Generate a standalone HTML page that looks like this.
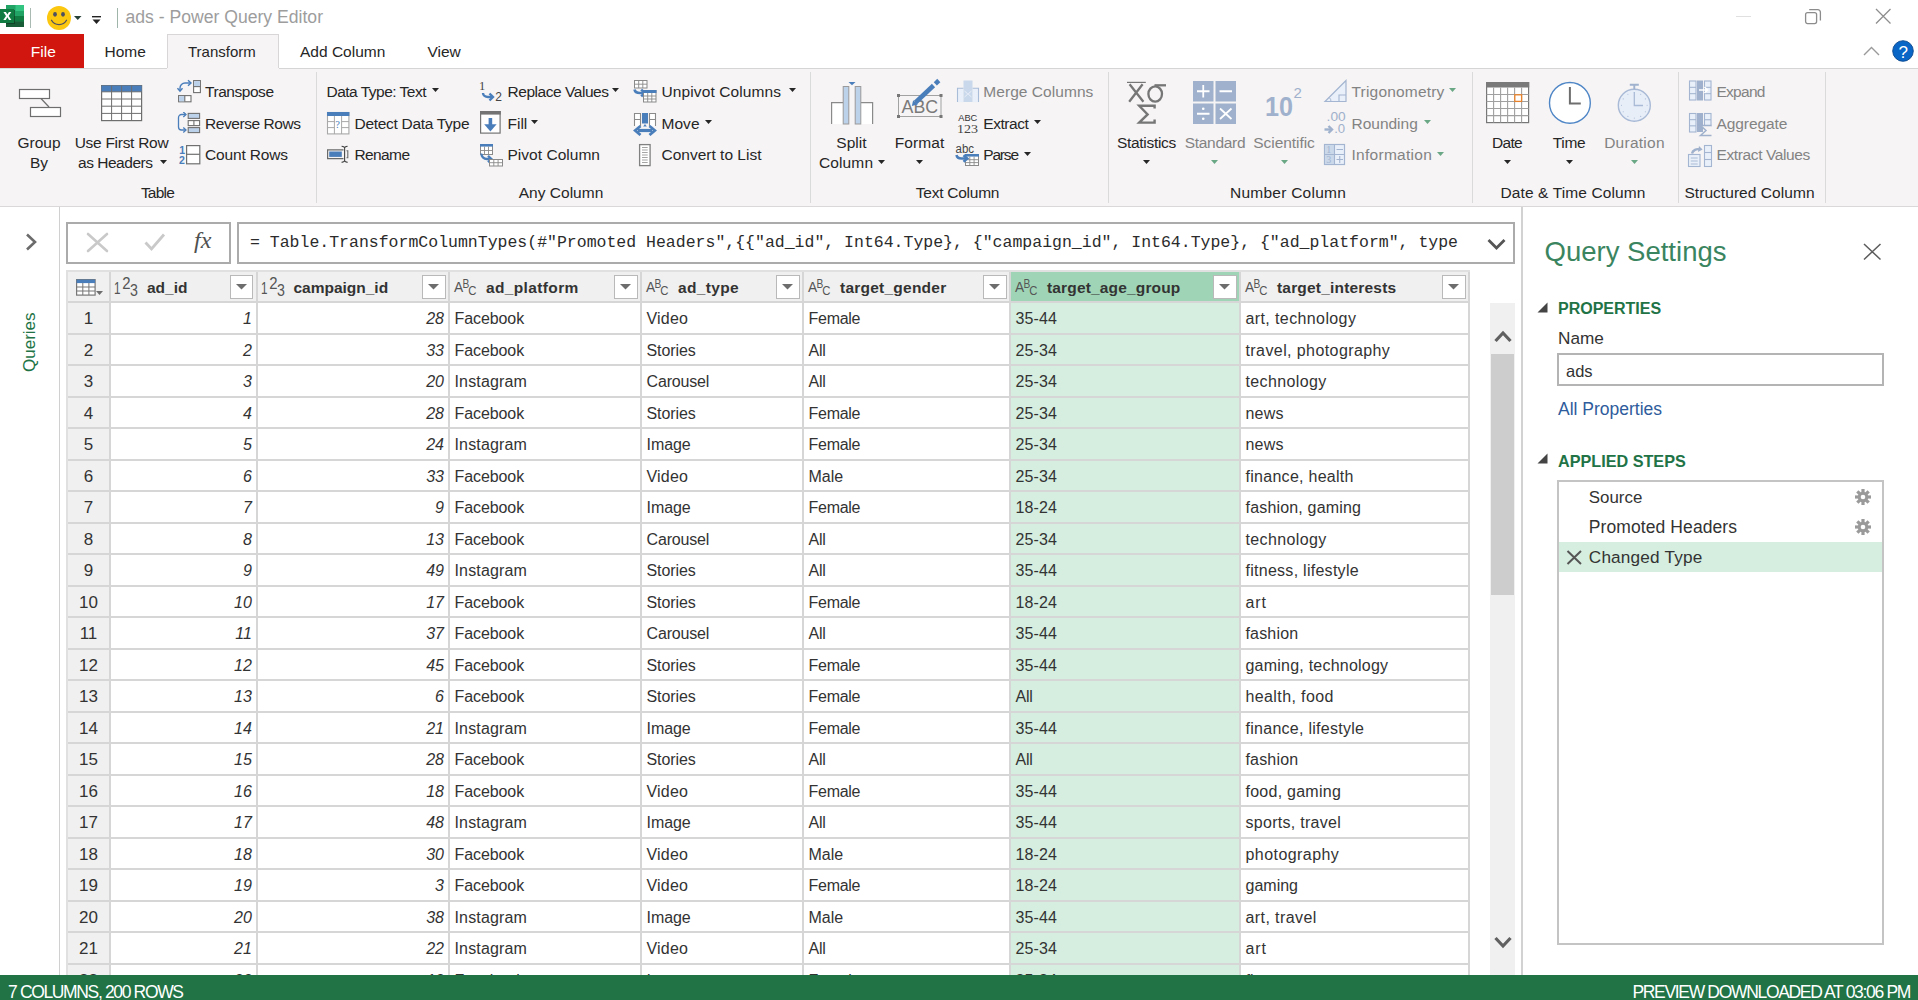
<!DOCTYPE html><html><head><meta charset="utf-8"><style>
html,body{margin:0;padding:0;}
body{width:1918px;height:1000px;position:relative;overflow:hidden;background:#fff;font-family:"Liberation Sans",sans-serif;}
.t{position:absolute;white-space:nowrap;line-height:1;}
.r{position:absolute;box-sizing:border-box;}
</style></head><body>

<svg class="r" style="left:0px;top:5px" width="25" height="23" viewBox="0 0 25 23">
<rect x="6" y="0" width="18" height="22" fill="#21a366"/>
<rect x="15.5" y="0" width="8.5" height="6" fill="#33c481"/>
<rect x="6" y="11" width="18" height="5.3" fill="#107c41"/>
<rect x="6" y="16.3" width="18" height="5.7" fill="#185c37"/>
<rect x="6" y="5" width="9" height="14" fill="#0e2e1c" opacity="0.55"/>
<rect x="0" y="4" width="14" height="14" fill="#107c41"/>
<path d="M3.4 7h2.5l1.5 2.6 1.5-2.6h2.4l-2.6 4 2.7 4H9l-1.6-2.7-1.6 2.7H3.3l2.7-4z" fill="#fff"/>
</svg>
<div class="r" style="left:29.8px;top:8px;width:1.2px;height:20px;background:#a9bab3;"></div>
<svg class="r" style="left:47px;top:6px" width="25" height="25" viewBox="0 0 25 25">
<circle cx="12" cy="12" r="12" fill="#fcc70f"/>
<ellipse cx="8" cy="8.3" rx="1.9" ry="2.4" fill="#4d5060"/>
<ellipse cx="16" cy="8.3" rx="1.9" ry="2.4" fill="#4d5060"/>
<path d="M4.5 14.3 A8.5 8 0 0 0 19.5 14.3" stroke="#4d5060" stroke-width="1.3" fill="none" stroke-linecap="round"/>
</svg>
<svg class="r" style="left:74px;top:16px" width="8" height="5" viewBox="0 0 8 5"><path d="M0 0H7.5L3.75 4Z" fill="#264037"/></svg>
<svg class="r" style="left:92px;top:15px" width="10" height="10" viewBox="0 0 10 10"><rect x="0" y="1" width="9" height="1.4" fill="#222"/><path d="M0.5 4.5H8.5L4.5 9Z" fill="#222"/></svg>
<div class="r" style="left:117px;top:8px;width:1.2px;height:20px;background:#9fb5ac;"></div>
<div class="t" style="left:125.5px;top:9.10px;font-size:17.6px;color:#9d9d9d;font-weight:normal;font-style:normal;font-family:'Liberation Sans', sans-serif;">ads - Power Query Editor</div>
<div class="r" style="left:1736px;top:16px;width:15px;height:1px;background:#e0e0e0;"></div>
<svg class="r" style="left:1804px;top:8px" width="18" height="17" viewBox="0 0 18 17"><rect x="1.6" y="4.6" width="11" height="11" rx="2" fill="none" stroke="#8c8c8c" stroke-width="1.3"/><path d="M5.2 1.6H13.8a2.6 2.6 0 0 1 2.6 2.6V12.6" fill="none" stroke="#8c8c8c" stroke-width="1.3"/></svg>
<svg class="r" style="left:1875px;top:8px" width="17" height="17" viewBox="0 0 17 17"><path d="M1 1L15.5 15.5M15.5 1L1 15.5" stroke="#8e8e8e" stroke-width="1.3"/></svg>
<div class="r" style="left:0px;top:34px;width:84px;height:34px;background:#d1160f;"></div>
<div class="t" style="left:30.8px;top:43.88px;font-size:15.5px;color:#ffffff;font-weight:normal;font-style:normal;font-family:'Liberation Sans', sans-serif;">File</div>
<div class="t" style="left:104.5px;top:43.88px;font-size:15.5px;color:#262626;font-weight:normal;font-style:normal;font-family:'Liberation Sans', sans-serif;">Home</div>
<div class="r" style="left:167px;top:34px;width:112px;height:35px;background:#f6f4f5;border:1px solid #d8d6d7;border-bottom:none;"></div>
<div class="t" style="left:188px;top:44.30px;font-size:15.0px;color:#262626;font-weight:normal;font-style:normal;font-family:'Liberation Sans', sans-serif;">Transform</div>
<div class="t" style="left:300px;top:43.88px;font-size:15.5px;color:#262626;font-weight:normal;font-style:normal;font-family:'Liberation Sans', sans-serif;">Add Column</div>
<div class="t" style="left:427.5px;top:43.88px;font-size:15.5px;color:#262626;font-weight:normal;font-style:normal;font-family:'Liberation Sans', sans-serif;">View</div>
<svg class="r" style="left:1863px;top:46px" width="18" height="10" viewBox="0 0 18 10"><path d="M1 9L8.5 1.5L16 9" fill="none" stroke="#9a9a9a" stroke-width="1.4"/></svg>
<svg class="r" style="left:1892px;top:40px" width="22" height="22" viewBox="0 0 22 22"><circle cx="11" cy="11" r="10.3" fill="#0a66c6" stroke="#0b4a8e" stroke-width="0.9"/><text x="11.3" y="17.6" font-family="Liberation Sans" font-size="17" fill="#fff" text-anchor="middle">?</text></svg>
<div class="r" style="left:0px;top:68px;width:1918px;height:139px;background:#f6f4f5;"></div>
<div class="r" style="left:0px;top:68px;width:167px;height:1px;background:#d5d5d5;"></div>
<div class="r" style="left:279px;top:68px;width:1639px;height:1px;background:#d5d5d5;"></div>
<div class="r" style="left:0px;top:206px;width:1918px;height:1px;background:#dad8d9;"></div>
<div class="r" style="left:316px;top:72px;width:1px;height:131px;background:#dadada;"></div>
<div class="r" style="left:810px;top:72px;width:1px;height:131px;background:#dadada;"></div>
<div class="r" style="left:1108px;top:72px;width:1px;height:131px;background:#dadada;"></div>
<div class="r" style="left:1471.5px;top:72px;width:1px;height:131px;background:#dadada;"></div>
<div class="r" style="left:1678px;top:72px;width:1px;height:131px;background:#dadada;"></div>
<div class="r" style="left:1825px;top:72px;width:1px;height:131px;background:#dadada;"></div>
<svg class="r" style="left:18px;top:88px" width="45" height="30" viewBox="0 0 45 30"><rect x="1.5" y="1.5" width="30" height="9" fill="#fff" stroke="#6e6e6e" stroke-width="1.2"/><path d="M23 10.5L31 19" stroke="#6e6e6e" stroke-width="1.2"/><rect x="12.5" y="19.5" width="30" height="9" fill="#fff" stroke="#6e6e6e" stroke-width="1.2"/></svg>
<div class="t" style="left:-1.0px;width:80px;text-align:center;top:134.58px;font-size:15.5px;color:#262626;font-weight:normal;letter-spacing:-0.023px;">Group</div>
<div class="t" style="left:-1.0px;width:80px;text-align:center;top:154.88px;font-size:15.5px;color:#262626;font-weight:normal;">By</div>
<svg class="r" style="left:101px;top:85px" width="42" height="37" viewBox="0 0 42 37"><rect x="0.6" y="0.6" width="40" height="35" fill="#fff" stroke="#6e6e6e" stroke-width="1.2"/><rect x="0.6" y="0.6" width="40" height="6.2" fill="#4a7ebb"/><path d="M10.6 0.6V35.6" stroke="#6e6e6e" stroke-width="1"/><path d="M20.6 0.6V35.6" stroke="#6e6e6e" stroke-width="1"/><path d="M30.6 0.6V35.6" stroke="#6e6e6e" stroke-width="1"/><path d="M0.6 6.8H40.6" stroke="#6e6e6e" stroke-width="1"/><path d="M0.6 14H40.6" stroke="#6e6e6e" stroke-width="1"/><path d="M0.6 21.2H40.6" stroke="#6e6e6e" stroke-width="1"/><path d="M0.6 28.4H40.6" stroke="#6e6e6e" stroke-width="1"/></svg>
<div class="t" style="left:61.5px;width:120px;text-align:center;top:134.58px;font-size:15.5px;color:#262626;font-weight:normal;letter-spacing:-0.282px;">Use First Row</div>
<div class="t" style="left:78px;top:154.88px;font-size:15.5px;color:#262626;font-weight:normal;font-style:normal;font-family:'Liberation Sans', sans-serif;letter-spacing:-0.476px;">as Headers</div>
<svg class="r" style="left:159.5px;top:160px" width="7" height="4" viewBox="0 0 7 4"><path d="M0 0H7L3.5 4Z" fill="#262626"/></svg>
<svg class="r" style="left:177px;top:79px" width="25" height="24" viewBox="0 0 25 24"><path d="M3 11.5V9a5 5 0 0 1 5-5H13.5" fill="none" stroke="#4a7ebb" stroke-width="1.4"/><path d="M11 1.3L14 4L11 6.7" fill="none" stroke="#4a7ebb" stroke-width="1.4"/><path d="M0.5 9.2L3 12.2L5.5 9.2" fill="none" stroke="#4a7ebb" stroke-width="1.4"/>
<rect x="16.6" y="1.6" width="6.8" height="12" fill="#fff" stroke="#707070" stroke-width="1.1"/><rect x="17.1" y="2.1" width="5.8" height="5.5" fill="#bcd1ea"/><path d="M16.6 7.6H23.4" stroke="#707070" stroke-width="1.1"/>
<rect x="1.6" y="16.6" width="12.4" height="6.2" fill="#fff" stroke="#707070" stroke-width="1.1"/><rect x="2.1" y="17.1" width="5.7" height="5.2" fill="#bcd1ea"/><path d="M7.8 16.6V22.8" stroke="#707070" stroke-width="1.1"/></svg>
<div class="t" style="left:205px;top:84.08px;font-size:15.5px;color:#262626;font-weight:normal;font-style:normal;font-family:'Liberation Sans', sans-serif;letter-spacing:-0.457px;">Transpose</div>
<svg class="r" style="left:177px;top:112px" width="24" height="24" viewBox="0 0 24 24"><path d="M8.5 2.5H4.5a3 3 0 0 0-3 3V15a3 3 0 0 0 3 3H8.5" fill="none" stroke="#4a7ebb" stroke-width="1.3"/><path d="M6.3 0L9 2.5L6.3 5M6.3 15.5L9 18L6.3 20.5" fill="none" stroke="#4a7ebb" stroke-width="1.3"/>
<rect x="11.2" y="1.4" width="11.4" height="5" fill="#bcd1ea" stroke="#707070" stroke-width="1.1"/><rect x="11.2" y="8.6" width="11.4" height="5" fill="#fff" stroke="#707070" stroke-width="1.1"/><path d="M16.9 8.6V13.6" stroke="#707070" stroke-width="1.1"/><rect x="11.2" y="15.6" width="11.4" height="5" fill="#bcd1ea" stroke="#707070" stroke-width="1.1"/></svg>
<div class="t" style="left:205px;top:115.68px;font-size:15.5px;color:#262626;font-weight:normal;font-style:normal;font-family:'Liberation Sans', sans-serif;letter-spacing:-0.435px;">Reverse Rows</div>
<svg class="r" style="left:177px;top:144px" width="24" height="22" viewBox="0 0 24 22"><text x="2.2" y="9.8" font-family="Liberation Sans" font-size="10.5" font-weight="bold" fill="#4a7ebb">1</text><text x="2" y="19.8" font-family="Liberation Sans" font-size="10.5" font-weight="bold" fill="#4a7ebb">2</text>
<rect x="9.6" y="1.6" width="13.2" height="18.2" fill="#fff" stroke="#707070" stroke-width="1.2"/><path d="M9.6 10.3H22.8" stroke="#707070" stroke-width="1.2"/></svg>
<div class="t" style="left:205px;top:147.38px;font-size:15.5px;color:#262626;font-weight:normal;font-style:normal;font-family:'Liberation Sans', sans-serif;letter-spacing:-0.160px;">Count Rows</div>
<div class="t" style="left:127.5px;width:60px;text-align:center;top:184.58px;font-size:15.5px;color:#262626;font-weight:normal;letter-spacing:-0.761px;">Table</div>
<div class="t" style="left:326.5px;top:84.08px;font-size:15.5px;color:#262626;font-weight:normal;font-style:normal;font-family:'Liberation Sans', sans-serif;letter-spacing:-0.510px;">Data Type: Text</div>
<svg class="r" style="left:432px;top:88px" width="7" height="4" viewBox="0 0 7 4"><path d="M0 0H7L3.5 4Z" fill="#262626"/></svg>
<svg class="r" style="left:326px;top:111px" width="24" height="24" viewBox="0 0 24 24"><rect x="1.5" y="1.5" width="21.4" height="21.4" fill="#fff" stroke="#a8a8a8" stroke-width="1.1"/><rect x="1" y="1" width="22.4" height="4" fill="#4a7ebb"/>
<path d="M8.4 5V23M15.6 5V23M1.5 10.6H8.4M15.6 10.6H23M1.5 16.6H8.4M15.6 16.6H23" stroke="#a8a8a8" stroke-width="1"/>
<text x="9.3" y="17.2" font-family="Liberation Serif" font-size="10.5" fill="#4a7ebb">?</text></svg>
<div class="t" style="left:354.5px;top:115.68px;font-size:15.5px;color:#262626;font-weight:normal;font-style:normal;font-family:'Liberation Sans', sans-serif;letter-spacing:-0.298px;">Detect Data Type</div>
<svg class="r" style="left:326px;top:145px" width="24" height="19" viewBox="0 0 24 19"><path d="M17.5 4.8H1.6V13.6H17.5" fill="none" stroke="#6a6a6a" stroke-width="1.2"/><rect x="3.2" y="6.5" width="12.6" height="5.4" fill="#4a7ebb"/><path d="M20.5 5.8H21.8V12.8H20.5" fill="none" stroke="#6a6a6a" stroke-width="1.1"/>
<path d="M18.6 2V16.5M15.6 1.2Q18.6 1.6 18.6 3Q18.6 1.6 21.6 1.2M15.6 17.4Q18.6 17 18.6 15.6Q18.6 17 21.6 17.4" fill="none" stroke="#444" stroke-width="1.1"/></svg>
<div class="t" style="left:354.5px;top:147.38px;font-size:15.5px;color:#262626;font-weight:normal;font-style:normal;font-family:'Liberation Sans', sans-serif;letter-spacing:-0.618px;">Rename</div>
<svg class="r" style="left:478px;top:79px" width="26" height="24" viewBox="0 0 26 24"><text x="1" y="10.8" font-family="Liberation Serif" font-size="12.5" fill="#444">1</text><text x="17.2" y="21.9" font-family="Liberation Sans" font-size="12" fill="#444">2</text>
<path d="M5 14a5 4 0 0 0 5 4H14" fill="none" stroke="#4a7ebb" stroke-width="2.4"/><path d="M11.5 14.5L15 18L11.5 21.5" fill="none" stroke="#4a7ebb" stroke-width="2.4"/></svg>
<div class="t" style="left:507.5px;top:84.08px;font-size:15.5px;color:#262626;font-weight:normal;font-style:normal;font-family:'Liberation Sans', sans-serif;letter-spacing:-0.455px;">Replace Values</div>
<svg class="r" style="left:612px;top:88px" width="7" height="4" viewBox="0 0 7 4"><path d="M0 0H7L3.5 4Z" fill="#262626"/></svg>
<svg class="r" style="left:479px;top:110px" width="23" height="25" viewBox="0 0 23 25"><rect x="1.6" y="1.6" width="19.5" height="21.5" fill="#fff" stroke="#747474" stroke-width="1.2"/><rect x="1" y="1" width="20.8" height="3.6" fill="#747474"/><path d="M11.4 8V17" stroke="#4a7ebb" stroke-width="3.6"/><path d="M5.2 14.2H17.6L11.4 21.5Z" fill="#4a7ebb"/></svg>
<div class="t" style="left:507.5px;top:115.68px;font-size:15.5px;color:#262626;font-weight:normal;font-style:normal;font-family:'Liberation Sans', sans-serif;">Fill</div>
<svg class="r" style="left:531px;top:120px" width="7" height="4" viewBox="0 0 7 4"><path d="M0 0H7L3.5 4Z" fill="#262626"/></svg>
<svg class="r" style="left:479px;top:143px" width="25" height="24" viewBox="0 0 25 24"><rect x="1.5" y="1.5" width="12" height="10" fill="#fff" stroke="#8a8a8a" stroke-width="1"/><rect x="1" y="1" width="13" height="2.6" fill="#4a7ebb"/><path d="M5.5 3.5V11.5M9.5 3.5V11.5M1.5 7.5H13.5" stroke="#8a8a8a" stroke-width="0.9"/>
<path d="M2.5 10.5a5.5 5 0 0 0 5.5 5.5H12" fill="none" stroke="#4a7ebb" stroke-width="2.3"/><path d="M9 12.8L12.4 16L9 19.2" fill="none" stroke="#4a7ebb" stroke-width="2.3"/>
<rect x="10.5" y="16.5" width="13" height="6.5" fill="#fff" stroke="#8a8a8a" stroke-width="1"/><path d="M14.8 16.5V23M19.1 16.5V23M10.5 19.7H23.5" stroke="#8a8a8a" stroke-width="0.9"/></svg>
<div class="t" style="left:507.5px;top:147.38px;font-size:15.5px;color:#262626;font-weight:normal;font-style:normal;font-family:'Liberation Sans', sans-serif;letter-spacing:0.029px;">Pivot Column</div>
<svg class="r" style="left:633px;top:79px" width="25" height="25" viewBox="0 0 25 25"><rect x="1.5" y="1.5" width="12.5" height="7.5" fill="#fff" stroke="#8a8a8a" stroke-width="1"/><path d="M5.7 1.5V9M9.8 1.5V9M1.5 5.2H14" stroke="#8a8a8a" stroke-width="0.9"/>
<path d="M1.5 10.5a5.5 4 0 0 0 5.5 3.5H11" fill="none" stroke="#4a7ebb" stroke-width="2.6"/><path d="M8.2 10.6L11.8 14L8.2 17.4" fill="none" stroke="#4a7ebb" stroke-width="2.6"/>
<rect x="10.5" y="11.5" width="12.5" height="11.5" fill="#fff" stroke="#8a8a8a" stroke-width="1"/><rect x="10" y="11" width="13.5" height="3" fill="#4a7ebb"/><path d="M14.7 14V23M18.8 14V23M10.5 17H23M10.5 20H23" stroke="#8a8a8a" stroke-width="0.9"/></svg>
<div class="t" style="left:661.5px;top:84.08px;font-size:15.5px;color:#262626;font-weight:normal;font-style:normal;font-family:'Liberation Sans', sans-serif;letter-spacing:0.112px;">Unpivot Columns</div>
<svg class="r" style="left:789px;top:88px" width="7" height="4" viewBox="0 0 7 4"><path d="M0 0H7L3.5 4Z" fill="#262626"/></svg>
<svg class="r" style="left:633px;top:112px" width="25" height="24" viewBox="0 0 25 24"><path d="M1.5 14V1.5H7.5V14M1.5 7.5H7.5M16.5 14V1.5H22.5V14M16.5 7.5H22.5" fill="#fff" stroke="#8a8a8a" stroke-width="1.1"/><rect x="9" y="1" width="6" height="10.5" fill="#4a7ebb"/><path d="M12 12L10.2 14.5H13.8Z" fill="#4a7ebb"/>
<path d="M5 18.5H19" stroke="#4a7ebb" stroke-width="3.2"/><path d="M7.5 14L2.2 18.5L7.5 23M16.5 14L21.8 18.5L16.5 23" fill="none" stroke="#4a7ebb" stroke-width="2.8"/></svg>
<div class="t" style="left:661.5px;top:115.68px;font-size:15.5px;color:#262626;font-weight:normal;font-style:normal;font-family:'Liberation Sans', sans-serif;letter-spacing:0.034px;">Move</div>
<svg class="r" style="left:705px;top:120px" width="7" height="4" viewBox="0 0 7 4"><path d="M0 0H7L3.5 4Z" fill="#262626"/></svg>
<svg class="r" style="left:638px;top:143px" width="14" height="24" viewBox="0 0 14 24"><rect x="1.6" y="1.6" width="10.5" height="21" fill="#fff" stroke="#808080" stroke-width="1.3"/><path d="M4 4.5H9.7M4 7H9.7M4 9.5H9.7M4 12H9.7M4 14.5H9.7M4 17H9.7M4 19.5H9.7" stroke="#9a9a9a" stroke-width="0.9"/></svg>
<div class="t" style="left:661.5px;top:147.38px;font-size:15.5px;color:#262626;font-weight:normal;font-style:normal;font-family:'Liberation Sans', sans-serif;letter-spacing:0.005px;">Convert to List</div>
<div class="t" style="left:501.0px;width:120px;text-align:center;top:184.58px;font-size:15.5px;color:#262626;font-weight:normal;letter-spacing:0.029px;">Any Column</div>
<svg class="r" style="left:830px;top:81px" width="45" height="44" viewBox="0 0 45 44"><rect x="1.6" y="21.6" width="11.6" height="21.4" fill="#fff"/><rect x="30.8" y="21.6" width="11.8" height="21.4" fill="#fff"/><path d="M1.6 43V21.6H13.2M30.8 21.6H42.6V43" fill="none" stroke="#8a8a8a" stroke-width="1.2"/>
<rect x="13.2" y="5.5" width="5.6" height="37.5" fill="#bcd1ea" stroke="#9a9a9a" stroke-width="1"/><rect x="25.2" y="5.5" width="5.6" height="37.5" fill="#bcd1ea" stroke="#9a9a9a" stroke-width="1"/><path d="M18.5 1H25.5L22 4.3Z" fill="#4a7ebb"/></svg>
<div class="t" style="left:821.5px;width:60px;text-align:center;top:134.58px;font-size:15.5px;color:#262626;font-weight:normal;letter-spacing:0.063px;">Split</div>
<div class="t" style="left:819px;top:154.88px;font-size:15.5px;color:#262626;font-weight:normal;font-style:normal;font-family:'Liberation Sans', sans-serif;letter-spacing:0.120px;">Column</div>
<svg class="r" style="left:878px;top:160px" width="7" height="4" viewBox="0 0 7 4"><path d="M0 0H7L3.5 4Z" fill="#262626"/></svg>
<svg class="r" style="left:896px;top:78px" width="47" height="41" viewBox="0 0 47 41"><rect x="2.5" y="17.5" width="42.5" height="21" fill="none" stroke="#9a9a9a" stroke-width="0.9"/><rect x="1" y="16" width="3" height="3" fill="#777"/><rect x="43.5" y="16" width="3" height="3" fill="#777"/><rect x="1" y="37" width="3" height="3" fill="#777"/><rect x="43.5" y="37" width="3" height="3" fill="#777"/>
<text x="23.8" y="34.7" font-family="Liberation Sans" font-size="19" fill="#7a7a7a" text-anchor="middle" textLength="36.5" lengthAdjust="spacingAndGlyphs">ABC</text>
<path d="M19.5 24.5L37.5 7.5" stroke="#4a7ebb" stroke-width="4.6"/><path d="M39.3 5.8L42.8 2.5" stroke="#4a7ebb" stroke-width="4.6"/><path d="M15.8 28L17.2 22.2L21.7 26.6Z" fill="#4a7ebb"/></svg>
<div class="t" style="left:884.5px;width:70px;text-align:center;top:134.58px;font-size:15.5px;color:#262626;font-weight:normal;letter-spacing:0.081px;">Format</div>
<svg class="r" style="left:916px;top:160px" width="7" height="4" viewBox="0 0 7 4"><path d="M0 0H7L3.5 4Z" fill="#262626"/></svg>
<svg class="r" style="left:956px;top:80px" width="24" height="23" viewBox="0 0 24 23"><rect x="1.5" y="8.2" width="6" height="14" fill="#eaf0f9"/><rect x="16.5" y="8.2" width="6" height="14" fill="#eaf0f9"/><path d="M1.5 22V8.2H7.5M16.5 8.2H22.5V22" fill="none" stroke="#a9bcd8" stroke-width="1.1"/><rect x="7.5" y="0.5" width="9" height="21.5" fill="#c9d8ea"/><path d="M8.5 11L11.8 14L8.5 17M15.5 11L12.2 14L15.5 17" fill="none" stroke="#eaf0f9" stroke-width="1"/></svg>
<div class="t" style="left:983.3px;top:84.08px;font-size:15.5px;color:#838383;font-weight:normal;font-style:normal;font-family:'Liberation Sans', sans-serif;letter-spacing:0.051px;">Merge Columns</div>
<svg class="r" style="left:956px;top:112px" width="23" height="22" viewBox="0 0 23 22"><text x="11.8" y="9.3" font-family="Liberation Sans" font-size="9.8" fill="#333" text-anchor="middle" textLength="19" lengthAdjust="spacingAndGlyphs">ABC</text><text x="11.5" y="20.5" font-family="Liberation Serif" font-size="13" fill="#444" text-anchor="middle" textLength="21" lengthAdjust="spacingAndGlyphs">123</text></svg>
<div class="t" style="left:983.3px;top:115.68px;font-size:15.5px;color:#262626;font-weight:normal;font-style:normal;font-family:'Liberation Sans', sans-serif;letter-spacing:-0.457px;">Extract</div>
<svg class="r" style="left:1034px;top:120px" width="7" height="4" viewBox="0 0 7 4"><path d="M0 0H7L3.5 4Z" fill="#262626"/></svg>
<svg class="r" style="left:955px;top:143px" width="25" height="24" viewBox="0 0 25 24"><text x="0.6" y="10" font-family="Liberation Sans" font-size="12.5" fill="#444" textLength="18.5" lengthAdjust="spacingAndGlyphs">abc</text>
<rect x="10.5" y="11.5" width="13" height="11" fill="#fff" stroke="#8a8a8a" stroke-width="1"/><rect x="10" y="11" width="14" height="2.6" fill="#4a7ebb"/><path d="M14.8 13.6V22.5M19.1 13.6V22.5M10.5 16.7H23.5M10.5 19.6H23.5" stroke="#8a8a8a" stroke-width="0.9"/>
<path d="M1.5 12a5 4 0 0 0 5 3.5H11.5" fill="none" stroke="#4a7ebb" stroke-width="2.5"/><path d="M8.5 12.3L12.3 15.5L8.5 18.7" fill="none" stroke="#4a7ebb" stroke-width="2.5"/></svg>
<div class="t" style="left:983.3px;top:147.38px;font-size:15.5px;color:#262626;font-weight:normal;font-style:normal;font-family:'Liberation Sans', sans-serif;letter-spacing:-1.198px;">Parse</div>
<svg class="r" style="left:1024px;top:152px" width="7" height="4" viewBox="0 0 7 4"><path d="M0 0H7L3.5 4Z" fill="#262626"/></svg>
<div class="t" style="left:897.5px;width:120px;text-align:center;top:184.58px;font-size:15.5px;color:#262626;font-weight:normal;letter-spacing:-0.244px;">Text Column</div>
<svg class="r" style="left:1126px;top:81px" width="42" height="44" viewBox="0 0 42 44"><g fill="none" stroke="#767676"><path d="M1 1.4H19.8" stroke-width="1.2"/><path d="M3.6 3.2L17.4 20.8M16.6 3.2L3.2 20.8" stroke-width="2.3"/><ellipse cx="29.2" cy="13" rx="6.8" ry="7.6" stroke-width="2.3"/><path d="M28.5 4.3H40" stroke-width="2.3"/><path d="M28.6 27.5V24.8H13.2L21.6 33.4L13.2 41.6H28.6V38.5" stroke-width="2.4"/></g></svg>
<div class="t" style="left:1106.5px;width:80px;text-align:center;top:134.58px;font-size:15.5px;color:#262626;font-weight:normal;letter-spacing:-0.300px;">Statistics</div>
<svg class="r" style="left:1143px;top:160px" width="7" height="4" viewBox="0 0 7 4"><path d="M0 0H7L3.5 4Z" fill="#262626"/></svg>
<svg class="r" style="left:1193px;top:81px" width="43" height="43" viewBox="0 0 43 43"><rect x="0" y="0" width="20.5" height="20.5" fill="#9fb1cc"/><rect x="22.5" y="0" width="20.5" height="20.5" fill="#9fb1cc"/><rect x="0" y="22.5" width="20.5" height="20.5" fill="#9fb1cc"/><rect x="22.5" y="22.5" width="20.5" height="20.5" fill="#9fb1cc"/>
<path d="M10.25 4V16.5M4 10.25H16.5M26.5 10.25H39M4 32.75H16.5M27 27.5L38.5 38M38.5 27.5L27 38" stroke="#fff" stroke-width="1.8"/><circle cx="10.25" cy="27.8" r="1.3" fill="#fff"/><circle cx="10.25" cy="37.7" r="1.3" fill="#fff"/></svg>
<div class="t" style="left:1175.0px;width:80px;text-align:center;top:134.58px;font-size:15.5px;color:#838383;font-weight:normal;letter-spacing:-0.284px;">Standard</div>
<svg class="r" style="left:1210.5px;top:160px" width="7" height="4" viewBox="0 0 7 4"><path d="M0 0H7L3.5 4Z" fill="#6aa784"/></svg>
<svg class="r" style="left:1264px;top:84px" width="40" height="34" viewBox="0 0 40 34"><text x="1" y="32" font-family="Liberation Sans" font-weight="bold" font-size="27" fill="#9fb1cc" textLength="28" lengthAdjust="spacingAndGlyphs">10</text><text x="29.5" y="14" font-family="Liberation Sans" font-size="15" fill="#9fb1cc">2</text></svg>
<div class="t" style="left:1244.0px;width:80px;text-align:center;top:134.58px;font-size:15.5px;color:#838383;font-weight:normal;letter-spacing:-0.060px;">Scientific</div>
<svg class="r" style="left:1280.5px;top:160px" width="7" height="4" viewBox="0 0 7 4"><path d="M0 0H7L3.5 4Z" fill="#6aa784"/></svg>
<svg class="r" style="left:1323px;top:79px" width="25" height="25" viewBox="0 0 25 25"><path d="M2 22.5L23 1.5V22.5Z" fill="#eaf0f9" stroke="#a3b5d0" stroke-width="1.2"/><path d="M16 22.5V16H23" fill="none" stroke="#a3b5d0" stroke-width="1.1"/><path d="M8 22.5a5 5 0 0 0-1.6-3.8" fill="none" stroke="#a3b5d0" stroke-width="1"/></svg>
<div class="t" style="left:1351.5px;top:84.08px;font-size:15.5px;color:#838383;font-weight:normal;font-style:normal;font-family:'Liberation Sans', sans-serif;letter-spacing:0.190px;">Trigonometry</div>
<svg class="r" style="left:1449px;top:88px" width="7" height="4" viewBox="0 0 7 4"><path d="M0 0H7L3.5 4Z" fill="#6aa784"/></svg>
<svg class="r" style="left:1323px;top:110px" width="25" height="25" viewBox="0 0 25 25"><text x="3.6" y="11" font-family="Liberation Sans" font-size="12.5" fill="#9fb1cc" textLength="19" lengthAdjust="spacingAndGlyphs">.00</text><text x="11.2" y="23.2" font-family="Liberation Sans" font-size="12.5" fill="#9fb1cc" textLength="11" lengthAdjust="spacingAndGlyphs">.0</text><path d="M1.5 19.5H8.5" stroke="#9fb1cc" stroke-width="2.4"/><path d="M5.5 16L9 19.5L5.5 23" fill="none" stroke="#9fb1cc" stroke-width="2.4"/></svg>
<div class="t" style="left:1351.5px;top:115.68px;font-size:15.5px;color:#838383;font-weight:normal;font-style:normal;font-family:'Liberation Sans', sans-serif;letter-spacing:-0.011px;">Rounding</div>
<svg class="r" style="left:1424px;top:120px" width="7" height="4" viewBox="0 0 7 4"><path d="M0 0H7L3.5 4Z" fill="#6aa784"/></svg>
<svg class="r" style="left:1323px;top:143px" width="23" height="23" viewBox="0 0 23 23"><rect x="1.5" y="1.5" width="20" height="20" fill="#eaf0f9" stroke="#a3b5d0" stroke-width="1.2"/><rect x="2" y="2" width="9.5" height="19" fill="#cad8ea"/><path d="M11.5 1.5V21.5M1.5 11.5H21.5" stroke="#a3b5d0" stroke-width="1.1"/>
<text x="3.3" y="10" font-family="Liberation Serif" font-size="10" fill="#a3b5d0">1</text><text x="3.3" y="20" font-family="Liberation Serif" font-size="10" fill="#a3b5d0">3</text><path d="M13.5 6.5H20M13.5 16.5H20M16.75 13V20" stroke="#a3b5d0" stroke-width="1.1"/></svg>
<div class="t" style="left:1351.5px;top:147.38px;font-size:15.5px;color:#838383;font-weight:normal;font-style:normal;font-family:'Liberation Sans', sans-serif;letter-spacing:0.276px;">Information</div>
<svg class="r" style="left:1437px;top:152px" width="7" height="4" viewBox="0 0 7 4"><path d="M0 0H7L3.5 4Z" fill="#6aa784"/></svg>
<div class="t" style="left:1223.0px;width:130px;text-align:center;top:184.58px;font-size:15.5px;color:#262626;font-weight:normal;letter-spacing:0.247px;">Number Column</div>
<svg class="r" style="left:1486px;top:82px" width="44" height="42" viewBox="0 0 44 42"><rect x="0.6" y="0.6" width="42" height="40" fill="#fff" stroke="#777" stroke-width="1.2"/><rect x="0" y="0" width="43.2" height="5.5" fill="#7a7a7a"/><path d="M7.60 5.5V40.6" stroke="#a0a0a0" stroke-width="1.1"/><path d="M14.60 5.5V40.6" stroke="#a0a0a0" stroke-width="1.1"/><path d="M21.60 5.5V40.6" stroke="#a0a0a0" stroke-width="1.1"/><path d="M28.60 5.5V40.6" stroke="#a0a0a0" stroke-width="1.1"/><path d="M35.60 5.5V40.6" stroke="#a0a0a0" stroke-width="1.1"/><path d="M0.6 12.52H42.6" stroke="#a0a0a0" stroke-width="1.1"/><path d="M0.6 19.54H42.6" stroke="#a0a0a0" stroke-width="1.1"/><path d="M0.6 26.56H42.6" stroke="#a0a0a0" stroke-width="1.1"/><path d="M0.6 33.58H42.6" stroke="#a0a0a0" stroke-width="1.1"/><rect x="28.8" y="12.8" width="6.8" height="6.6" fill="#fff" stroke="#e8822a" stroke-width="1.3"/></svg>
<div class="t" style="left:1477.0px;width:60px;text-align:center;top:134.58px;font-size:15.5px;color:#262626;font-weight:normal;letter-spacing:-0.648px;">Date</div>
<svg class="r" style="left:1504px;top:160px" width="7" height="4" viewBox="0 0 7 4"><path d="M0 0H7L3.5 4Z" fill="#262626"/></svg>
<svg class="r" style="left:1548px;top:81px" width="44" height="44" viewBox="0 0 44 44"><circle cx="21.9" cy="21.9" r="20.4" fill="#fff" stroke="#4f86c6" stroke-width="1.4"/><path d="M21.9 6V22.6H32.8" fill="none" stroke="#6e6e6e" stroke-width="2"/></svg>
<div class="t" style="left:1539.0px;width:60px;text-align:center;top:134.58px;font-size:15.5px;color:#262626;font-weight:normal;letter-spacing:-0.356px;">Time</div>
<svg class="r" style="left:1566px;top:160px" width="7" height="4" viewBox="0 0 7 4"><path d="M0 0H7L3.5 4Z" fill="#262626"/></svg>
<svg class="r" style="left:1616px;top:83px" width="36" height="40" viewBox="0 0 36 40"><circle cx="18.3" cy="22.3" r="16" fill="#e8eef8" stroke="#a9bad6" stroke-width="1.4"/><path d="M18.3 6.3V2M13.8 1.8H22.8" stroke="#a0b2ce" stroke-width="1.9"/><circle cx="31.10" cy="22.30" r="0.55" fill="#a9bad6"/><circle cx="29.39" cy="28.70" r="0.55" fill="#a9bad6"/><circle cx="24.70" cy="33.39" r="0.55" fill="#a9bad6"/><circle cx="18.30" cy="35.10" r="0.55" fill="#a9bad6"/><circle cx="11.90" cy="33.39" r="0.55" fill="#a9bad6"/><circle cx="7.21" cy="28.70" r="0.55" fill="#a9bad6"/><circle cx="5.50" cy="22.30" r="0.55" fill="#a9bad6"/><circle cx="7.21" cy="15.90" r="0.55" fill="#a9bad6"/><circle cx="11.90" cy="11.21" r="0.55" fill="#a9bad6"/><circle cx="18.30" cy="9.50" r="0.55" fill="#a9bad6"/><circle cx="24.70" cy="11.21" r="0.55" fill="#a9bad6"/><circle cx="29.39" cy="15.90" r="0.55" fill="#a9bad6"/><path d="M18.3 9V22.5H27" fill="none" stroke="#a9bad6" stroke-width="1.3"/></svg>
<div class="t" style="left:1594.5px;width:80px;text-align:center;top:134.58px;font-size:15.5px;color:#838383;font-weight:normal;letter-spacing:0.259px;">Duration</div>
<svg class="r" style="left:1631px;top:160px" width="7" height="4" viewBox="0 0 7 4"><path d="M0 0H7L3.5 4Z" fill="#6aa784"/></svg>
<div class="t" style="left:1493.0px;width:160px;text-align:center;top:184.58px;font-size:15.5px;color:#262626;font-weight:normal;letter-spacing:0.112px;">Date &amp; Time Column</div>
<svg class="r" style="left:1688px;top:80px" width="25" height="21" viewBox="0 0 25 21"><rect x="1.5" y="1" width="6.5" height="19" fill="#eaf0f9" stroke="#a3b5d0" stroke-width="1.1"/><path d="M1.5 7.33H8.0" stroke="#a3b5d0" stroke-width="1.1"/><path d="M1.5 13.67H8.0" stroke="#a3b5d0" stroke-width="1.1"/><rect x="9" y="0.5" width="6" height="20" fill="#9fb1cc"/><rect x="16.5" y="1" width="6.5" height="19" fill="#eaf0f9" stroke="#a3b5d0" stroke-width="1.1"/><path d="M16.5 7.33H23.0" stroke="#a3b5d0" stroke-width="1.1"/><path d="M16.5 13.67H23.0" stroke="#a3b5d0" stroke-width="1.1"/><path d="M11 10H19M16.5 7L19.5 10L16.5 13" fill="none" stroke="#fff" stroke-width="1.6"/></svg>
<div class="t" style="left:1716.5px;top:84.08px;font-size:15.5px;color:#838383;font-weight:normal;font-style:normal;font-family:'Liberation Sans', sans-serif;letter-spacing:-0.737px;">Expand</div>
<svg class="r" style="left:1688px;top:112px" width="25" height="25" viewBox="0 0 25 25"><rect x="1.5" y="1.5" width="6.5" height="18.5" fill="#eaf0f9" stroke="#a3b5d0" stroke-width="1.1"/><path d="M1.5 7.67H8.0" stroke="#a3b5d0" stroke-width="1.1"/><path d="M1.5 13.83H8.0" stroke="#a3b5d0" stroke-width="1.1"/><rect x="9" y="1" width="6" height="19" fill="#9fb1cc"/><rect x="16.5" y="1.5" width="6.5" height="12.5" fill="#eaf0f9" stroke="#a3b5d0" stroke-width="1.1"/><path d="M16.5 7.75H23.0" stroke="#a3b5d0" stroke-width="1.1"/><path d="M23.5 13.5H12.5L18 18.5L12.5 23.5H23.5" fill="#f6f4f5" stroke="#9fb1cc" stroke-width="1.5"/></svg>
<div class="t" style="left:1716.5px;top:115.68px;font-size:15.5px;color:#838383;font-weight:normal;font-style:normal;font-family:'Liberation Sans', sans-serif;letter-spacing:-0.079px;">Aggregate</div>
<svg class="r" style="left:1687px;top:144px" width="26" height="24" viewBox="0 0 26 24"><rect x="1.5" y="10.5" width="11.5" height="12" fill="#eaf0f9" stroke="#a3b5d0" stroke-width="1.1"/><path d="M3.8 14H10.7M3.8 17H10.7M3.8 20H10.7" stroke="#a3b5d0" stroke-width="0.9"/><path d="M5 9.5a6 5.5 0 0 1 8-4" fill="none" stroke="#9fb1cc" stroke-width="2.4"/><path d="M12 2L15.6 5.5L11 8Z" fill="#9fb1cc"/><rect x="17.5" y="1.5" width="7" height="21" fill="#eaf0f9" stroke="#a3b5d0" stroke-width="1.1"/><path d="M17.5 8.50H24.5" stroke="#a3b5d0" stroke-width="1.1"/><path d="M17.5 15.50H24.5" stroke="#a3b5d0" stroke-width="1.1"/></svg>
<div class="t" style="left:1716.5px;top:147.38px;font-size:15.5px;color:#838383;font-weight:normal;font-style:normal;font-family:'Liberation Sans', sans-serif;letter-spacing:-0.383px;">Extract Values</div>
<div class="t" style="left:1674.5px;width:150px;text-align:center;top:184.58px;font-size:15.5px;color:#262626;font-weight:normal;letter-spacing:0.054px;">Structured Column</div>
<div class="r" style="left:59px;top:207px;width:1px;height:768px;background:#d0d0d0;"></div>
<svg class="r" style="left:25px;top:233px" width="13" height="18" viewBox="0 0 13 18"><path d="M2 1.5L10 9L2 16.5" fill="none" stroke="#6b6b6b" stroke-width="2.6"/></svg>
<div class="t" style="left:22px;top:372px;font-size:17px;color:#217346;transform-origin:0 0;transform:rotate(-90deg);line-height:15px;">Queries</div>
<div class="r" style="left:66px;top:222px;width:165px;height:42px;background:#fff;border:2px solid #ababab;"></div>
<svg class="r" style="left:86px;top:232px" width="24" height="21" viewBox="0 0 24 21"><path d="M2 2L21 19M21 2L2 19" stroke="#c9c9c9" stroke-width="2.6" stroke-linecap="round"/></svg>
<svg class="r" style="left:144px;top:232px" width="22" height="20" viewBox="0 0 22 20"><path d="M1.5 10.5L7.5 17L20 2.5" fill="none" stroke="#c9c9c9" stroke-width="2.8"/></svg>
<div class="t" style="left:194px;top:228px;font-size:24px;font-family:'Liberation Serif',serif;font-style:italic;color:#505050;letter-spacing:0px;line-height:1;">fx</div>
<div class="r" style="left:237px;top:222px;width:1278px;height:42px;background:#fff;border:2px solid #ababab;"></div>
<div class="t" style="left:250px;top:235.23px;font-size:16.5px;color:#2b2b2b;font-weight:normal;font-style:normal;font-family:'Liberation Mono', monospace;letter-spacing:0.0px">= Table.TransformColumnTypes(#&quot;Promoted Headers&quot;,{{&quot;ad_id&quot;, Int64.Type}, {&quot;campaign_id&quot;, Int64.Type}, {&quot;ad_platform&quot;, type</div>
<svg class="r" style="left:1487px;top:238px" width="19" height="13" viewBox="0 0 19 13"><path d="M1.5 2L9.5 10L17.5 2" fill="none" stroke="#555" stroke-width="2.8"/></svg>
<div class="r" style="left:66px;top:270px;width:1404px;height:2px;background:#e0e0e0;"></div>
<div class="r" style="left:66px;top:270px;width:2px;height:705px;background:#e0e0e0;"></div>
<div class="r" style="left:68px;top:272px;width:1400px;height:28.5px;background:#f0f0f0;"></div>
<div class="r" style="left:1011px;top:272px;width:228px;height:28.5px;background:#9fd5b6;"></div>
<div class="r" style="left:1011px;top:303.3px;width:228px;height:671.7px;background:#d5eee0;"></div>
<div class="r" style="left:68px;top:303.3px;width:41px;height:671.7px;background:#f0f0f0;"></div>
<div class="r" style="left:68px;top:301px;width:1402px;height:2px;background:#d6d6d6;"></div>
<div class="r" style="left:109px;top:272px;width:2px;height:703px;background:#d6d6d6;"></div>
<div class="r" style="left:255.5px;top:272px;width:2px;height:703px;background:#d6d6d6;"></div>
<div class="r" style="left:448px;top:272px;width:2px;height:703px;background:#d6d6d6;"></div>
<div class="r" style="left:640px;top:272px;width:2px;height:703px;background:#d6d6d6;"></div>
<div class="r" style="left:802px;top:272px;width:2px;height:703px;background:#d6d6d6;"></div>
<div class="r" style="left:1009px;top:272px;width:2px;height:703px;background:#d6d6d6;"></div>
<div class="r" style="left:1239px;top:272px;width:2px;height:703px;background:#d6d6d6;"></div>
<div class="r" style="left:1468px;top:272px;width:2px;height:703px;background:#d6d6d6;"></div>
<div class="r" style="left:68px;top:332.8px;width:1402px;height:2px;background:#d6d6d6;"></div>
<div class="t" style="left:68.5px;width:40px;text-align:center;top:310.31px;font-size:17px;color:#333333;font-weight:normal;">1</div>
<div class="t" style="right:1666.200px;top:311.16px;font-size:16px;color:#333333;font-weight:normal;font-style:italic;">1</div>
<div class="t" style="right:1474.000px;top:311.16px;font-size:16px;color:#333333;font-weight:normal;font-style:italic;">28</div>
<div class="t" style="left:454.5px;top:311.16px;font-size:16px;color:#333333;font-weight:normal;font-style:normal;font-family:'Liberation Sans', sans-serif;letter-spacing:-0.089px;">Facebook</div>
<div class="t" style="left:646.5px;top:311.16px;font-size:16px;color:#333333;font-weight:normal;font-style:normal;font-family:'Liberation Sans', sans-serif;letter-spacing:0.215px;">Video</div>
<div class="t" style="left:808.5px;top:311.16px;font-size:16px;color:#333333;font-weight:normal;font-style:normal;font-family:'Liberation Sans', sans-serif;letter-spacing:-0.272px;">Female</div>
<div class="t" style="left:1015.5px;top:311.16px;font-size:16px;color:#333333;font-weight:normal;font-style:normal;font-family:'Liberation Sans', sans-serif;letter-spacing:0.145px;">35-44</div>
<div class="t" style="left:1245.5px;top:311.16px;font-size:16px;color:#333333;font-weight:normal;font-style:normal;font-family:'Liberation Sans', sans-serif;letter-spacing:0.389px;">art, technology</div>
<div class="r" style="left:68px;top:364.3px;width:1402px;height:2px;background:#d6d6d6;"></div>
<div class="t" style="left:68.5px;width:40px;text-align:center;top:341.81px;font-size:17px;color:#333333;font-weight:normal;">2</div>
<div class="t" style="right:1666.200px;top:342.66px;font-size:16px;color:#333333;font-weight:normal;font-style:italic;">2</div>
<div class="t" style="right:1474.000px;top:342.66px;font-size:16px;color:#333333;font-weight:normal;font-style:italic;">33</div>
<div class="t" style="left:454.5px;top:342.66px;font-size:16px;color:#333333;font-weight:normal;font-style:normal;font-family:'Liberation Sans', sans-serif;letter-spacing:-0.089px;">Facebook</div>
<div class="t" style="left:646.5px;top:342.66px;font-size:16px;color:#333333;font-weight:normal;font-style:normal;font-family:'Liberation Sans', sans-serif;letter-spacing:-0.083px;">Stories</div>
<div class="t" style="left:808.5px;top:342.66px;font-size:16px;color:#333333;font-weight:normal;font-style:normal;font-family:'Liberation Sans', sans-serif;letter-spacing:-0.250px;">All</div>
<div class="t" style="left:1015.5px;top:342.66px;font-size:16px;color:#333333;font-weight:normal;font-style:normal;font-family:'Liberation Sans', sans-serif;letter-spacing:0.145px;">25-34</div>
<div class="t" style="left:1245.5px;top:342.66px;font-size:16px;color:#333333;font-weight:normal;font-style:normal;font-family:'Liberation Sans', sans-serif;letter-spacing:0.411px;">travel, photography</div>
<div class="r" style="left:68px;top:395.8px;width:1402px;height:2px;background:#d6d6d6;"></div>
<div class="t" style="left:68.5px;width:40px;text-align:center;top:373.31px;font-size:17px;color:#333333;font-weight:normal;">3</div>
<div class="t" style="right:1666.200px;top:374.16px;font-size:16px;color:#333333;font-weight:normal;font-style:italic;">3</div>
<div class="t" style="right:1474.000px;top:374.16px;font-size:16px;color:#333333;font-weight:normal;font-style:italic;">20</div>
<div class="t" style="left:454.5px;top:374.16px;font-size:16px;color:#333333;font-weight:normal;font-style:normal;font-family:'Liberation Sans', sans-serif;letter-spacing:0.155px;">Instagram</div>
<div class="t" style="left:646.5px;top:374.16px;font-size:16px;color:#333333;font-weight:normal;font-style:normal;font-family:'Liberation Sans', sans-serif;letter-spacing:-0.163px;">Carousel</div>
<div class="t" style="left:808.5px;top:374.16px;font-size:16px;color:#333333;font-weight:normal;font-style:normal;font-family:'Liberation Sans', sans-serif;letter-spacing:-0.250px;">All</div>
<div class="t" style="left:1015.5px;top:374.16px;font-size:16px;color:#333333;font-weight:normal;font-style:normal;font-family:'Liberation Sans', sans-serif;letter-spacing:0.145px;">25-34</div>
<div class="t" style="left:1245.5px;top:374.16px;font-size:16px;color:#333333;font-weight:normal;font-style:normal;font-family:'Liberation Sans', sans-serif;letter-spacing:0.378px;">technology</div>
<div class="r" style="left:68px;top:427.3px;width:1402px;height:2px;background:#d6d6d6;"></div>
<div class="t" style="left:68.5px;width:40px;text-align:center;top:404.81px;font-size:17px;color:#333333;font-weight:normal;">4</div>
<div class="t" style="right:1666.200px;top:405.66px;font-size:16px;color:#333333;font-weight:normal;font-style:italic;">4</div>
<div class="t" style="right:1474.000px;top:405.66px;font-size:16px;color:#333333;font-weight:normal;font-style:italic;">28</div>
<div class="t" style="left:454.5px;top:405.66px;font-size:16px;color:#333333;font-weight:normal;font-style:normal;font-family:'Liberation Sans', sans-serif;letter-spacing:-0.089px;">Facebook</div>
<div class="t" style="left:646.5px;top:405.66px;font-size:16px;color:#333333;font-weight:normal;font-style:normal;font-family:'Liberation Sans', sans-serif;letter-spacing:-0.083px;">Stories</div>
<div class="t" style="left:808.5px;top:405.66px;font-size:16px;color:#333333;font-weight:normal;font-style:normal;font-family:'Liberation Sans', sans-serif;letter-spacing:-0.272px;">Female</div>
<div class="t" style="left:1015.5px;top:405.66px;font-size:16px;color:#333333;font-weight:normal;font-style:normal;font-family:'Liberation Sans', sans-serif;letter-spacing:0.145px;">25-34</div>
<div class="t" style="left:1245.5px;top:405.66px;font-size:16px;color:#333333;font-weight:normal;font-style:normal;font-family:'Liberation Sans', sans-serif;letter-spacing:0.213px;">news</div>
<div class="r" style="left:68px;top:458.8px;width:1402px;height:2px;background:#d6d6d6;"></div>
<div class="t" style="left:68.5px;width:40px;text-align:center;top:436.31px;font-size:17px;color:#333333;font-weight:normal;">5</div>
<div class="t" style="right:1666.200px;top:437.16px;font-size:16px;color:#333333;font-weight:normal;font-style:italic;">5</div>
<div class="t" style="right:1474.000px;top:437.16px;font-size:16px;color:#333333;font-weight:normal;font-style:italic;">24</div>
<div class="t" style="left:454.5px;top:437.16px;font-size:16px;color:#333333;font-weight:normal;font-style:normal;font-family:'Liberation Sans', sans-serif;letter-spacing:0.155px;">Instagram</div>
<div class="t" style="left:646.5px;top:437.16px;font-size:16px;color:#333333;font-weight:normal;font-style:normal;font-family:'Liberation Sans', sans-serif;letter-spacing:-0.070px;">Image</div>
<div class="t" style="left:808.5px;top:437.16px;font-size:16px;color:#333333;font-weight:normal;font-style:normal;font-family:'Liberation Sans', sans-serif;letter-spacing:-0.272px;">Female</div>
<div class="t" style="left:1015.5px;top:437.16px;font-size:16px;color:#333333;font-weight:normal;font-style:normal;font-family:'Liberation Sans', sans-serif;letter-spacing:0.145px;">25-34</div>
<div class="t" style="left:1245.5px;top:437.16px;font-size:16px;color:#333333;font-weight:normal;font-style:normal;font-family:'Liberation Sans', sans-serif;letter-spacing:0.213px;">news</div>
<div class="r" style="left:68px;top:490.3px;width:1402px;height:2px;background:#d6d6d6;"></div>
<div class="t" style="left:68.5px;width:40px;text-align:center;top:467.81px;font-size:17px;color:#333333;font-weight:normal;">6</div>
<div class="t" style="right:1666.200px;top:468.66px;font-size:16px;color:#333333;font-weight:normal;font-style:italic;">6</div>
<div class="t" style="right:1474.000px;top:468.66px;font-size:16px;color:#333333;font-weight:normal;font-style:italic;">33</div>
<div class="t" style="left:454.5px;top:468.66px;font-size:16px;color:#333333;font-weight:normal;font-style:normal;font-family:'Liberation Sans', sans-serif;letter-spacing:-0.089px;">Facebook</div>
<div class="t" style="left:646.5px;top:468.66px;font-size:16px;color:#333333;font-weight:normal;font-style:normal;font-family:'Liberation Sans', sans-serif;letter-spacing:0.215px;">Video</div>
<div class="t" style="left:808.5px;top:468.66px;font-size:16px;color:#333333;font-weight:normal;font-style:normal;font-family:'Liberation Sans', sans-serif;">Male</div>
<div class="t" style="left:1015.5px;top:468.66px;font-size:16px;color:#333333;font-weight:normal;font-style:normal;font-family:'Liberation Sans', sans-serif;letter-spacing:0.145px;">25-34</div>
<div class="t" style="left:1245.5px;top:468.66px;font-size:16px;color:#333333;font-weight:normal;font-style:normal;font-family:'Liberation Sans', sans-serif;letter-spacing:0.280px;">finance, health</div>
<div class="r" style="left:68px;top:521.8px;width:1402px;height:2px;background:#d6d6d6;"></div>
<div class="t" style="left:68.5px;width:40px;text-align:center;top:499.31px;font-size:17px;color:#333333;font-weight:normal;">7</div>
<div class="t" style="right:1666.200px;top:500.16px;font-size:16px;color:#333333;font-weight:normal;font-style:italic;">7</div>
<div class="t" style="right:1474.000px;top:500.16px;font-size:16px;color:#333333;font-weight:normal;font-style:italic;">9</div>
<div class="t" style="left:454.5px;top:500.16px;font-size:16px;color:#333333;font-weight:normal;font-style:normal;font-family:'Liberation Sans', sans-serif;letter-spacing:-0.089px;">Facebook</div>
<div class="t" style="left:646.5px;top:500.16px;font-size:16px;color:#333333;font-weight:normal;font-style:normal;font-family:'Liberation Sans', sans-serif;letter-spacing:-0.070px;">Image</div>
<div class="t" style="left:808.5px;top:500.16px;font-size:16px;color:#333333;font-weight:normal;font-style:normal;font-family:'Liberation Sans', sans-serif;letter-spacing:-0.272px;">Female</div>
<div class="t" style="left:1015.5px;top:500.16px;font-size:16px;color:#333333;font-weight:normal;font-style:normal;font-family:'Liberation Sans', sans-serif;letter-spacing:0.145px;">18-24</div>
<div class="t" style="left:1245.5px;top:500.16px;font-size:16px;color:#333333;font-weight:normal;font-style:normal;font-family:'Liberation Sans', sans-serif;letter-spacing:0.181px;">fashion, gaming</div>
<div class="r" style="left:68px;top:553.3px;width:1402px;height:2px;background:#d6d6d6;"></div>
<div class="t" style="left:68.5px;width:40px;text-align:center;top:530.81px;font-size:17px;color:#333333;font-weight:normal;">8</div>
<div class="t" style="right:1666.200px;top:531.66px;font-size:16px;color:#333333;font-weight:normal;font-style:italic;">8</div>
<div class="t" style="right:1474.000px;top:531.66px;font-size:16px;color:#333333;font-weight:normal;font-style:italic;">13</div>
<div class="t" style="left:454.5px;top:531.66px;font-size:16px;color:#333333;font-weight:normal;font-style:normal;font-family:'Liberation Sans', sans-serif;letter-spacing:-0.089px;">Facebook</div>
<div class="t" style="left:646.5px;top:531.66px;font-size:16px;color:#333333;font-weight:normal;font-style:normal;font-family:'Liberation Sans', sans-serif;letter-spacing:-0.163px;">Carousel</div>
<div class="t" style="left:808.5px;top:531.66px;font-size:16px;color:#333333;font-weight:normal;font-style:normal;font-family:'Liberation Sans', sans-serif;letter-spacing:-0.250px;">All</div>
<div class="t" style="left:1015.5px;top:531.66px;font-size:16px;color:#333333;font-weight:normal;font-style:normal;font-family:'Liberation Sans', sans-serif;letter-spacing:0.145px;">25-34</div>
<div class="t" style="left:1245.5px;top:531.66px;font-size:16px;color:#333333;font-weight:normal;font-style:normal;font-family:'Liberation Sans', sans-serif;letter-spacing:0.378px;">technology</div>
<div class="r" style="left:68px;top:584.8px;width:1402px;height:2px;background:#d6d6d6;"></div>
<div class="t" style="left:68.5px;width:40px;text-align:center;top:562.31px;font-size:17px;color:#333333;font-weight:normal;">9</div>
<div class="t" style="right:1666.200px;top:563.16px;font-size:16px;color:#333333;font-weight:normal;font-style:italic;">9</div>
<div class="t" style="right:1474.000px;top:563.16px;font-size:16px;color:#333333;font-weight:normal;font-style:italic;">49</div>
<div class="t" style="left:454.5px;top:563.16px;font-size:16px;color:#333333;font-weight:normal;font-style:normal;font-family:'Liberation Sans', sans-serif;letter-spacing:0.155px;">Instagram</div>
<div class="t" style="left:646.5px;top:563.16px;font-size:16px;color:#333333;font-weight:normal;font-style:normal;font-family:'Liberation Sans', sans-serif;letter-spacing:-0.083px;">Stories</div>
<div class="t" style="left:808.5px;top:563.16px;font-size:16px;color:#333333;font-weight:normal;font-style:normal;font-family:'Liberation Sans', sans-serif;letter-spacing:-0.250px;">All</div>
<div class="t" style="left:1015.5px;top:563.16px;font-size:16px;color:#333333;font-weight:normal;font-style:normal;font-family:'Liberation Sans', sans-serif;letter-spacing:0.145px;">35-44</div>
<div class="t" style="left:1245.5px;top:563.16px;font-size:16px;color:#333333;font-weight:normal;font-style:normal;font-family:'Liberation Sans', sans-serif;letter-spacing:0.272px;">fitness, lifestyle</div>
<div class="r" style="left:68px;top:616.3px;width:1402px;height:2px;background:#d6d6d6;"></div>
<div class="t" style="left:68.5px;width:40px;text-align:center;top:593.81px;font-size:17px;color:#333333;font-weight:normal;">10</div>
<div class="t" style="right:1666.200px;top:594.66px;font-size:16px;color:#333333;font-weight:normal;font-style:italic;">10</div>
<div class="t" style="right:1474.000px;top:594.66px;font-size:16px;color:#333333;font-weight:normal;font-style:italic;">17</div>
<div class="t" style="left:454.5px;top:594.66px;font-size:16px;color:#333333;font-weight:normal;font-style:normal;font-family:'Liberation Sans', sans-serif;letter-spacing:-0.089px;">Facebook</div>
<div class="t" style="left:646.5px;top:594.66px;font-size:16px;color:#333333;font-weight:normal;font-style:normal;font-family:'Liberation Sans', sans-serif;letter-spacing:-0.083px;">Stories</div>
<div class="t" style="left:808.5px;top:594.66px;font-size:16px;color:#333333;font-weight:normal;font-style:normal;font-family:'Liberation Sans', sans-serif;letter-spacing:-0.272px;">Female</div>
<div class="t" style="left:1015.5px;top:594.66px;font-size:16px;color:#333333;font-weight:normal;font-style:normal;font-family:'Liberation Sans', sans-serif;letter-spacing:0.145px;">18-24</div>
<div class="t" style="left:1245.5px;top:594.66px;font-size:16px;color:#333333;font-weight:normal;font-style:normal;font-family:'Liberation Sans', sans-serif;letter-spacing:0.860px;">art</div>
<div class="r" style="left:68px;top:647.8px;width:1402px;height:2px;background:#d6d6d6;"></div>
<div class="t" style="left:68.5px;width:40px;text-align:center;top:625.31px;font-size:17px;color:#333333;font-weight:normal;">11</div>
<div class="t" style="right:1666.200px;top:626.16px;font-size:16px;color:#333333;font-weight:normal;font-style:italic;">11</div>
<div class="t" style="right:1474.000px;top:626.16px;font-size:16px;color:#333333;font-weight:normal;font-style:italic;">37</div>
<div class="t" style="left:454.5px;top:626.16px;font-size:16px;color:#333333;font-weight:normal;font-style:normal;font-family:'Liberation Sans', sans-serif;letter-spacing:-0.089px;">Facebook</div>
<div class="t" style="left:646.5px;top:626.16px;font-size:16px;color:#333333;font-weight:normal;font-style:normal;font-family:'Liberation Sans', sans-serif;letter-spacing:-0.163px;">Carousel</div>
<div class="t" style="left:808.5px;top:626.16px;font-size:16px;color:#333333;font-weight:normal;font-style:normal;font-family:'Liberation Sans', sans-serif;letter-spacing:-0.250px;">All</div>
<div class="t" style="left:1015.5px;top:626.16px;font-size:16px;color:#333333;font-weight:normal;font-style:normal;font-family:'Liberation Sans', sans-serif;letter-spacing:0.145px;">35-44</div>
<div class="t" style="left:1245.5px;top:626.16px;font-size:16px;color:#333333;font-weight:normal;font-style:normal;font-family:'Liberation Sans', sans-serif;letter-spacing:0.167px;">fashion</div>
<div class="r" style="left:68px;top:679.3px;width:1402px;height:2px;background:#d6d6d6;"></div>
<div class="t" style="left:68.5px;width:40px;text-align:center;top:656.81px;font-size:17px;color:#333333;font-weight:normal;">12</div>
<div class="t" style="right:1666.200px;top:657.66px;font-size:16px;color:#333333;font-weight:normal;font-style:italic;">12</div>
<div class="t" style="right:1474.000px;top:657.66px;font-size:16px;color:#333333;font-weight:normal;font-style:italic;">45</div>
<div class="t" style="left:454.5px;top:657.66px;font-size:16px;color:#333333;font-weight:normal;font-style:normal;font-family:'Liberation Sans', sans-serif;letter-spacing:-0.089px;">Facebook</div>
<div class="t" style="left:646.5px;top:657.66px;font-size:16px;color:#333333;font-weight:normal;font-style:normal;font-family:'Liberation Sans', sans-serif;letter-spacing:-0.083px;">Stories</div>
<div class="t" style="left:808.5px;top:657.66px;font-size:16px;color:#333333;font-weight:normal;font-style:normal;font-family:'Liberation Sans', sans-serif;letter-spacing:-0.272px;">Female</div>
<div class="t" style="left:1015.5px;top:657.66px;font-size:16px;color:#333333;font-weight:normal;font-style:normal;font-family:'Liberation Sans', sans-serif;letter-spacing:0.145px;">35-44</div>
<div class="t" style="left:1245.5px;top:657.66px;font-size:16px;color:#333333;font-weight:normal;font-style:normal;font-family:'Liberation Sans', sans-serif;letter-spacing:0.226px;">gaming, technology</div>
<div class="r" style="left:68px;top:710.8px;width:1402px;height:2px;background:#d6d6d6;"></div>
<div class="t" style="left:68.5px;width:40px;text-align:center;top:688.31px;font-size:17px;color:#333333;font-weight:normal;">13</div>
<div class="t" style="right:1666.200px;top:689.16px;font-size:16px;color:#333333;font-weight:normal;font-style:italic;">13</div>
<div class="t" style="right:1474.000px;top:689.16px;font-size:16px;color:#333333;font-weight:normal;font-style:italic;">6</div>
<div class="t" style="left:454.5px;top:689.16px;font-size:16px;color:#333333;font-weight:normal;font-style:normal;font-family:'Liberation Sans', sans-serif;letter-spacing:-0.089px;">Facebook</div>
<div class="t" style="left:646.5px;top:689.16px;font-size:16px;color:#333333;font-weight:normal;font-style:normal;font-family:'Liberation Sans', sans-serif;letter-spacing:-0.083px;">Stories</div>
<div class="t" style="left:808.5px;top:689.16px;font-size:16px;color:#333333;font-weight:normal;font-style:normal;font-family:'Liberation Sans', sans-serif;letter-spacing:-0.272px;">Female</div>
<div class="t" style="left:1015.5px;top:689.16px;font-size:16px;color:#333333;font-weight:normal;font-style:normal;font-family:'Liberation Sans', sans-serif;letter-spacing:-0.250px;">All</div>
<div class="t" style="left:1245.5px;top:689.16px;font-size:16px;color:#333333;font-weight:normal;font-style:normal;font-family:'Liberation Sans', sans-serif;letter-spacing:0.387px;">health, food</div>
<div class="r" style="left:68px;top:742.3px;width:1402px;height:2px;background:#d6d6d6;"></div>
<div class="t" style="left:68.5px;width:40px;text-align:center;top:719.81px;font-size:17px;color:#333333;font-weight:normal;">14</div>
<div class="t" style="right:1666.200px;top:720.66px;font-size:16px;color:#333333;font-weight:normal;font-style:italic;">14</div>
<div class="t" style="right:1474.000px;top:720.66px;font-size:16px;color:#333333;font-weight:normal;font-style:italic;">21</div>
<div class="t" style="left:454.5px;top:720.66px;font-size:16px;color:#333333;font-weight:normal;font-style:normal;font-family:'Liberation Sans', sans-serif;letter-spacing:0.155px;">Instagram</div>
<div class="t" style="left:646.5px;top:720.66px;font-size:16px;color:#333333;font-weight:normal;font-style:normal;font-family:'Liberation Sans', sans-serif;letter-spacing:-0.070px;">Image</div>
<div class="t" style="left:808.5px;top:720.66px;font-size:16px;color:#333333;font-weight:normal;font-style:normal;font-family:'Liberation Sans', sans-serif;letter-spacing:-0.272px;">Female</div>
<div class="t" style="left:1015.5px;top:720.66px;font-size:16px;color:#333333;font-weight:normal;font-style:normal;font-family:'Liberation Sans', sans-serif;letter-spacing:0.145px;">35-44</div>
<div class="t" style="left:1245.5px;top:720.66px;font-size:16px;color:#333333;font-weight:normal;font-style:normal;font-family:'Liberation Sans', sans-serif;letter-spacing:0.274px;">finance, lifestyle</div>
<div class="r" style="left:68px;top:773.8px;width:1402px;height:2px;background:#d6d6d6;"></div>
<div class="t" style="left:68.5px;width:40px;text-align:center;top:751.31px;font-size:17px;color:#333333;font-weight:normal;">15</div>
<div class="t" style="right:1666.200px;top:752.16px;font-size:16px;color:#333333;font-weight:normal;font-style:italic;">15</div>
<div class="t" style="right:1474.000px;top:752.16px;font-size:16px;color:#333333;font-weight:normal;font-style:italic;">28</div>
<div class="t" style="left:454.5px;top:752.16px;font-size:16px;color:#333333;font-weight:normal;font-style:normal;font-family:'Liberation Sans', sans-serif;letter-spacing:-0.089px;">Facebook</div>
<div class="t" style="left:646.5px;top:752.16px;font-size:16px;color:#333333;font-weight:normal;font-style:normal;font-family:'Liberation Sans', sans-serif;letter-spacing:-0.083px;">Stories</div>
<div class="t" style="left:808.5px;top:752.16px;font-size:16px;color:#333333;font-weight:normal;font-style:normal;font-family:'Liberation Sans', sans-serif;letter-spacing:-0.250px;">All</div>
<div class="t" style="left:1015.5px;top:752.16px;font-size:16px;color:#333333;font-weight:normal;font-style:normal;font-family:'Liberation Sans', sans-serif;letter-spacing:-0.250px;">All</div>
<div class="t" style="left:1245.5px;top:752.16px;font-size:16px;color:#333333;font-weight:normal;font-style:normal;font-family:'Liberation Sans', sans-serif;letter-spacing:0.167px;">fashion</div>
<div class="r" style="left:68px;top:805.3px;width:1402px;height:2px;background:#d6d6d6;"></div>
<div class="t" style="left:68.5px;width:40px;text-align:center;top:782.81px;font-size:17px;color:#333333;font-weight:normal;">16</div>
<div class="t" style="right:1666.200px;top:783.66px;font-size:16px;color:#333333;font-weight:normal;font-style:italic;">16</div>
<div class="t" style="right:1474.000px;top:783.66px;font-size:16px;color:#333333;font-weight:normal;font-style:italic;">18</div>
<div class="t" style="left:454.5px;top:783.66px;font-size:16px;color:#333333;font-weight:normal;font-style:normal;font-family:'Liberation Sans', sans-serif;letter-spacing:-0.089px;">Facebook</div>
<div class="t" style="left:646.5px;top:783.66px;font-size:16px;color:#333333;font-weight:normal;font-style:normal;font-family:'Liberation Sans', sans-serif;letter-spacing:0.215px;">Video</div>
<div class="t" style="left:808.5px;top:783.66px;font-size:16px;color:#333333;font-weight:normal;font-style:normal;font-family:'Liberation Sans', sans-serif;letter-spacing:-0.272px;">Female</div>
<div class="t" style="left:1015.5px;top:783.66px;font-size:16px;color:#333333;font-weight:normal;font-style:normal;font-family:'Liberation Sans', sans-serif;letter-spacing:0.145px;">35-44</div>
<div class="t" style="left:1245.5px;top:783.66px;font-size:16px;color:#333333;font-weight:normal;font-style:normal;font-family:'Liberation Sans', sans-serif;letter-spacing:0.253px;">food, gaming</div>
<div class="r" style="left:68px;top:836.8px;width:1402px;height:2px;background:#d6d6d6;"></div>
<div class="t" style="left:68.5px;width:40px;text-align:center;top:814.31px;font-size:17px;color:#333333;font-weight:normal;">17</div>
<div class="t" style="right:1666.200px;top:815.16px;font-size:16px;color:#333333;font-weight:normal;font-style:italic;">17</div>
<div class="t" style="right:1474.000px;top:815.16px;font-size:16px;color:#333333;font-weight:normal;font-style:italic;">48</div>
<div class="t" style="left:454.5px;top:815.16px;font-size:16px;color:#333333;font-weight:normal;font-style:normal;font-family:'Liberation Sans', sans-serif;letter-spacing:0.155px;">Instagram</div>
<div class="t" style="left:646.5px;top:815.16px;font-size:16px;color:#333333;font-weight:normal;font-style:normal;font-family:'Liberation Sans', sans-serif;letter-spacing:-0.070px;">Image</div>
<div class="t" style="left:808.5px;top:815.16px;font-size:16px;color:#333333;font-weight:normal;font-style:normal;font-family:'Liberation Sans', sans-serif;letter-spacing:-0.250px;">All</div>
<div class="t" style="left:1015.5px;top:815.16px;font-size:16px;color:#333333;font-weight:normal;font-style:normal;font-family:'Liberation Sans', sans-serif;letter-spacing:0.145px;">35-44</div>
<div class="t" style="left:1245.5px;top:815.16px;font-size:16px;color:#333333;font-weight:normal;font-style:normal;font-family:'Liberation Sans', sans-serif;letter-spacing:0.285px;">sports, travel</div>
<div class="r" style="left:68px;top:868.3px;width:1402px;height:2px;background:#d6d6d6;"></div>
<div class="t" style="left:68.5px;width:40px;text-align:center;top:845.81px;font-size:17px;color:#333333;font-weight:normal;">18</div>
<div class="t" style="right:1666.200px;top:846.66px;font-size:16px;color:#333333;font-weight:normal;font-style:italic;">18</div>
<div class="t" style="right:1474.000px;top:846.66px;font-size:16px;color:#333333;font-weight:normal;font-style:italic;">30</div>
<div class="t" style="left:454.5px;top:846.66px;font-size:16px;color:#333333;font-weight:normal;font-style:normal;font-family:'Liberation Sans', sans-serif;letter-spacing:-0.089px;">Facebook</div>
<div class="t" style="left:646.5px;top:846.66px;font-size:16px;color:#333333;font-weight:normal;font-style:normal;font-family:'Liberation Sans', sans-serif;letter-spacing:0.215px;">Video</div>
<div class="t" style="left:808.5px;top:846.66px;font-size:16px;color:#333333;font-weight:normal;font-style:normal;font-family:'Liberation Sans', sans-serif;">Male</div>
<div class="t" style="left:1015.5px;top:846.66px;font-size:16px;color:#333333;font-weight:normal;font-style:normal;font-family:'Liberation Sans', sans-serif;letter-spacing:0.145px;">18-24</div>
<div class="t" style="left:1245.5px;top:846.66px;font-size:16px;color:#333333;font-weight:normal;font-style:normal;font-family:'Liberation Sans', sans-serif;letter-spacing:0.434px;">photography</div>
<div class="r" style="left:68px;top:899.8px;width:1402px;height:2px;background:#d6d6d6;"></div>
<div class="t" style="left:68.5px;width:40px;text-align:center;top:877.31px;font-size:17px;color:#333333;font-weight:normal;">19</div>
<div class="t" style="right:1666.200px;top:878.16px;font-size:16px;color:#333333;font-weight:normal;font-style:italic;">19</div>
<div class="t" style="right:1474.000px;top:878.16px;font-size:16px;color:#333333;font-weight:normal;font-style:italic;">3</div>
<div class="t" style="left:454.5px;top:878.16px;font-size:16px;color:#333333;font-weight:normal;font-style:normal;font-family:'Liberation Sans', sans-serif;letter-spacing:-0.089px;">Facebook</div>
<div class="t" style="left:646.5px;top:878.16px;font-size:16px;color:#333333;font-weight:normal;font-style:normal;font-family:'Liberation Sans', sans-serif;letter-spacing:0.215px;">Video</div>
<div class="t" style="left:808.5px;top:878.16px;font-size:16px;color:#333333;font-weight:normal;font-style:normal;font-family:'Liberation Sans', sans-serif;letter-spacing:-0.272px;">Female</div>
<div class="t" style="left:1015.5px;top:878.16px;font-size:16px;color:#333333;font-weight:normal;font-style:normal;font-family:'Liberation Sans', sans-serif;letter-spacing:0.145px;">18-24</div>
<div class="t" style="left:1245.5px;top:878.16px;font-size:16px;color:#333333;font-weight:normal;font-style:normal;font-family:'Liberation Sans', sans-serif;letter-spacing:0.004px;">gaming</div>
<div class="r" style="left:68px;top:931.3px;width:1402px;height:2px;background:#d6d6d6;"></div>
<div class="t" style="left:68.5px;width:40px;text-align:center;top:908.81px;font-size:17px;color:#333333;font-weight:normal;">20</div>
<div class="t" style="right:1666.200px;top:909.66px;font-size:16px;color:#333333;font-weight:normal;font-style:italic;">20</div>
<div class="t" style="right:1474.000px;top:909.66px;font-size:16px;color:#333333;font-weight:normal;font-style:italic;">38</div>
<div class="t" style="left:454.5px;top:909.66px;font-size:16px;color:#333333;font-weight:normal;font-style:normal;font-family:'Liberation Sans', sans-serif;letter-spacing:0.155px;">Instagram</div>
<div class="t" style="left:646.5px;top:909.66px;font-size:16px;color:#333333;font-weight:normal;font-style:normal;font-family:'Liberation Sans', sans-serif;letter-spacing:-0.070px;">Image</div>
<div class="t" style="left:808.5px;top:909.66px;font-size:16px;color:#333333;font-weight:normal;font-style:normal;font-family:'Liberation Sans', sans-serif;">Male</div>
<div class="t" style="left:1015.5px;top:909.66px;font-size:16px;color:#333333;font-weight:normal;font-style:normal;font-family:'Liberation Sans', sans-serif;letter-spacing:0.145px;">35-44</div>
<div class="t" style="left:1245.5px;top:909.66px;font-size:16px;color:#333333;font-weight:normal;font-style:normal;font-family:'Liberation Sans', sans-serif;letter-spacing:0.412px;">art, travel</div>
<div class="r" style="left:68px;top:962.8px;width:1402px;height:2px;background:#d6d6d6;"></div>
<div class="t" style="left:68.5px;width:40px;text-align:center;top:940.31px;font-size:17px;color:#333333;font-weight:normal;">21</div>
<div class="t" style="right:1666.200px;top:941.16px;font-size:16px;color:#333333;font-weight:normal;font-style:italic;">21</div>
<div class="t" style="right:1474.000px;top:941.16px;font-size:16px;color:#333333;font-weight:normal;font-style:italic;">22</div>
<div class="t" style="left:454.5px;top:941.16px;font-size:16px;color:#333333;font-weight:normal;font-style:normal;font-family:'Liberation Sans', sans-serif;letter-spacing:0.155px;">Instagram</div>
<div class="t" style="left:646.5px;top:941.16px;font-size:16px;color:#333333;font-weight:normal;font-style:normal;font-family:'Liberation Sans', sans-serif;letter-spacing:0.215px;">Video</div>
<div class="t" style="left:808.5px;top:941.16px;font-size:16px;color:#333333;font-weight:normal;font-style:normal;font-family:'Liberation Sans', sans-serif;letter-spacing:-0.250px;">All</div>
<div class="t" style="left:1015.5px;top:941.16px;font-size:16px;color:#333333;font-weight:normal;font-style:normal;font-family:'Liberation Sans', sans-serif;letter-spacing:0.145px;">25-34</div>
<div class="t" style="left:1245.5px;top:941.16px;font-size:16px;color:#333333;font-weight:normal;font-style:normal;font-family:'Liberation Sans', sans-serif;letter-spacing:0.860px;">art</div>
<div class="r" style="left:68px;top:994.3px;width:1402px;height:2px;background:#d6d6d6;"></div>
<div class="t" style="left:68.5px;width:40px;text-align:center;top:971.81px;font-size:17px;color:#333333;font-weight:normal;">22</div>
<div class="t" style="right:1666.200px;top:972.66px;font-size:16px;color:#333333;font-weight:normal;font-style:italic;">22</div>
<div class="t" style="right:1474.000px;top:972.66px;font-size:16px;color:#333333;font-weight:normal;font-style:italic;">12</div>
<div class="t" style="left:454.5px;top:972.66px;font-size:16px;color:#333333;font-weight:normal;font-style:normal;font-family:'Liberation Sans', sans-serif;letter-spacing:-0.089px;">Facebook</div>
<div class="t" style="left:646.5px;top:972.66px;font-size:16px;color:#333333;font-weight:normal;font-style:normal;font-family:'Liberation Sans', sans-serif;letter-spacing:-0.070px;">Image</div>
<div class="t" style="left:808.5px;top:972.66px;font-size:16px;color:#333333;font-weight:normal;font-style:normal;font-family:'Liberation Sans', sans-serif;letter-spacing:-0.272px;">Female</div>
<div class="t" style="left:1015.5px;top:972.66px;font-size:16px;color:#333333;font-weight:normal;font-style:normal;font-family:'Liberation Sans', sans-serif;letter-spacing:0.145px;">25-34</div>
<div class="t" style="left:1245.5px;top:972.66px;font-size:16px;color:#333333;font-weight:normal;font-style:normal;font-family:'Liberation Sans', sans-serif;">finance</div>
<svg class="r" style="left:111px;top:272px;overflow:visible" width="30" height="28"><g font-family="Liberation Sans" font-size="17" fill="#555"><text x="2.9" y="21.9" textLength="6.5" lengthAdjust="spacingAndGlyphs">1</text><text x="11.2" y="17.1" textLength="8.3" lengthAdjust="spacingAndGlyphs">2</text><text x="18.9" y="24.3" textLength="7.9" lengthAdjust="spacingAndGlyphs">3</text></g></svg>
<div class="t" style="left:147px;top:280.08px;font-size:15.5px;color:#333;font-weight:bold;font-style:normal;font-family:'Liberation Sans', sans-serif;letter-spacing:-0.023px;">ad_id</div>
<div class="r" style="left:229.5px;top:275.3px;width:23.5px;height:23.5px;background:#fff;border:1px solid #b9b9b9;"></div>
<svg class="r" style="left:235.5px;top:284px" width="12" height="6" viewBox="0 0 12 6"><path d="M0 0H11L5.5 5.5Z" fill="#6d6d6d"/></svg>
<svg class="r" style="left:257.5px;top:272px;overflow:visible" width="30" height="28"><g font-family="Liberation Sans" font-size="17" fill="#555"><text x="2.9" y="21.9" textLength="6.5" lengthAdjust="spacingAndGlyphs">1</text><text x="11.2" y="17.1" textLength="8.3" lengthAdjust="spacingAndGlyphs">2</text><text x="18.9" y="24.3" textLength="7.9" lengthAdjust="spacingAndGlyphs">3</text></g></svg>
<div class="t" style="left:293.5px;top:280.08px;font-size:15.5px;color:#333;font-weight:bold;font-style:normal;font-family:'Liberation Sans', sans-serif;letter-spacing:-0.014px;">campaign_id</div>
<div class="r" style="left:422px;top:275.3px;width:23.5px;height:23.5px;background:#fff;border:1px solid #b9b9b9;"></div>
<svg class="r" style="left:428px;top:284px" width="12" height="6" viewBox="0 0 12 6"><path d="M0 0H11L5.5 5.5Z" fill="#6d6d6d"/></svg>
<svg class="r" style="left:450px;top:272px;overflow:visible" width="30" height="28"><g font-family="Liberation Sans" fill="#555"><text x="3.9" y="19.8" font-size="15" textLength="9.2" lengthAdjust="spacingAndGlyphs">A</text><text x="12.6" y="15.6" font-size="12.5" textLength="6.8" lengthAdjust="spacingAndGlyphs">B</text><text x="18.2" y="23.1" font-size="13.5" textLength="8.2" lengthAdjust="spacingAndGlyphs">C</text></g></svg>
<div class="t" style="left:486px;top:280.08px;font-size:15.5px;color:#333;font-weight:bold;font-style:normal;font-family:'Liberation Sans', sans-serif;letter-spacing:0.360px;">ad_platform</div>
<div class="r" style="left:614px;top:275.3px;width:23.5px;height:23.5px;background:#fff;border:1px solid #b9b9b9;"></div>
<svg class="r" style="left:620px;top:284px" width="12" height="6" viewBox="0 0 12 6"><path d="M0 0H11L5.5 5.5Z" fill="#6d6d6d"/></svg>
<svg class="r" style="left:642px;top:272px;overflow:visible" width="30" height="28"><g font-family="Liberation Sans" fill="#555"><text x="3.9" y="19.8" font-size="15" textLength="9.2" lengthAdjust="spacingAndGlyphs">A</text><text x="12.6" y="15.6" font-size="12.5" textLength="6.8" lengthAdjust="spacingAndGlyphs">B</text><text x="18.2" y="23.1" font-size="13.5" textLength="8.2" lengthAdjust="spacingAndGlyphs">C</text></g></svg>
<div class="t" style="left:678px;top:280.08px;font-size:15.5px;color:#333;font-weight:bold;font-style:normal;font-family:'Liberation Sans', sans-serif;letter-spacing:0.335px;">ad_type</div>
<div class="r" style="left:776px;top:275.3px;width:23.5px;height:23.5px;background:#fff;border:1px solid #b9b9b9;"></div>
<svg class="r" style="left:782px;top:284px" width="12" height="6" viewBox="0 0 12 6"><path d="M0 0H11L5.5 5.5Z" fill="#6d6d6d"/></svg>
<svg class="r" style="left:804px;top:272px;overflow:visible" width="30" height="28"><g font-family="Liberation Sans" fill="#555"><text x="3.9" y="19.8" font-size="15" textLength="9.2" lengthAdjust="spacingAndGlyphs">A</text><text x="12.6" y="15.6" font-size="12.5" textLength="6.8" lengthAdjust="spacingAndGlyphs">B</text><text x="18.2" y="23.1" font-size="13.5" textLength="8.2" lengthAdjust="spacingAndGlyphs">C</text></g></svg>
<div class="t" style="left:840px;top:280.08px;font-size:15.5px;color:#333;font-weight:bold;font-style:normal;font-family:'Liberation Sans', sans-serif;letter-spacing:0.238px;">target_gender</div>
<div class="r" style="left:983px;top:275.3px;width:23.5px;height:23.5px;background:#fff;border:1px solid #b9b9b9;"></div>
<svg class="r" style="left:989px;top:284px" width="12" height="6" viewBox="0 0 12 6"><path d="M0 0H11L5.5 5.5Z" fill="#6d6d6d"/></svg>
<svg class="r" style="left:1011px;top:272px;overflow:visible" width="30" height="28"><g font-family="Liberation Sans" fill="#555"><text x="3.9" y="19.8" font-size="15" textLength="9.2" lengthAdjust="spacingAndGlyphs">A</text><text x="12.6" y="15.6" font-size="12.5" textLength="6.8" lengthAdjust="spacingAndGlyphs">B</text><text x="18.2" y="23.1" font-size="13.5" textLength="8.2" lengthAdjust="spacingAndGlyphs">C</text></g></svg>
<div class="t" style="left:1047px;top:280.08px;font-size:15.5px;color:#333;font-weight:bold;font-style:normal;font-family:'Liberation Sans', sans-serif;letter-spacing:0.158px;">target_age_group</div>
<div class="r" style="left:1213px;top:275.3px;width:23.5px;height:23.5px;background:#fff;border:1px solid #b9b9b9;"></div>
<svg class="r" style="left:1219px;top:284px" width="12" height="6" viewBox="0 0 12 6"><path d="M0 0H11L5.5 5.5Z" fill="#6d6d6d"/></svg>
<svg class="r" style="left:1241px;top:272px;overflow:visible" width="30" height="28"><g font-family="Liberation Sans" fill="#555"><text x="3.9" y="19.8" font-size="15" textLength="9.2" lengthAdjust="spacingAndGlyphs">A</text><text x="12.6" y="15.6" font-size="12.5" textLength="6.8" lengthAdjust="spacingAndGlyphs">B</text><text x="18.2" y="23.1" font-size="13.5" textLength="8.2" lengthAdjust="spacingAndGlyphs">C</text></g></svg>
<div class="t" style="left:1277px;top:280.08px;font-size:15.5px;color:#333;font-weight:bold;font-style:normal;font-family:'Liberation Sans', sans-serif;letter-spacing:0.187px;">target_interests</div>
<div class="r" style="left:1442px;top:275.3px;width:23.5px;height:23.5px;background:#fff;border:1px solid #b9b9b9;"></div>
<svg class="r" style="left:1448px;top:284px" width="12" height="6" viewBox="0 0 12 6"><path d="M0 0H11L5.5 5.5Z" fill="#6d6d6d"/></svg>
<svg class="r" style="left:76px;top:279px" width="29" height="17" viewBox="0 0 29 17"><rect x="0.6" y="0.6" width="18.5" height="15.5" fill="#fff" stroke="#777" stroke-width="1.2"/><rect x="0.6" y="0.6" width="18.5" height="3.5" fill="#4a7ebb"/>
<path d="M6.8 4V16M12.9 4V16M0.6 8H19M0.6 12H19" stroke="#777" stroke-width="1"/><path d="M20 12H27L23.5 16Z" fill="#6d6d6d"/></svg>
<div class="r" style="left:1490px;top:303px;width:25px;height:672px;background:#f0f0f0;"></div>
<div class="r" style="left:1491px;top:354px;width:23px;height:241px;background:#cdcdcd;"></div>
<svg class="r" style="left:1494px;top:329px" width="18" height="14" viewBox="0 0 18 14"><path d="M1.5 12L9 4L16.5 12" fill="none" stroke="#606060" stroke-width="3.2"/></svg>
<svg class="r" style="left:1494px;top:936px" width="18" height="14" viewBox="0 0 18 14"><path d="M1.5 2L9 10L16.5 2" fill="none" stroke="#606060" stroke-width="3.2"/></svg>
<div class="r" style="left:1521px;top:207px;width:2px;height:768px;background:#d2d2d2;"></div>
<div class="t" style="left:1544.5px;top:238.32px;font-size:27.5px;color:#3a8560;font-weight:normal;font-style:normal;font-family:'Liberation Sans', sans-serif;letter-spacing:0.007px;">Query Settings</div>
<svg class="r" style="left:1863px;top:243px" width="19" height="18" viewBox="0 0 19 18"><path d="M1 1L17.5 16.5M17.5 1L1 16.5" stroke="#5c5c5c" stroke-width="1.5"/></svg>
<svg class="r" style="left:1537px;top:302px" width="11" height="11" viewBox="0 0 11 11"><path d="M10.5 0.5V10.5H0.5Z" fill="#444"/></svg>
<div class="t" style="left:1558px;top:301.46px;font-size:16px;color:#217346;font-weight:bold;font-style:normal;font-family:'Liberation Sans', sans-serif;">PROPERTIES</div>
<div class="t" style="left:1558px;top:330.24px;font-size:17.2px;color:#333;font-weight:normal;font-style:normal;font-family:'Liberation Sans', sans-serif;">Name</div>
<div class="r" style="left:1557px;top:353px;width:327px;height:32.5px;background:#fff;border:2px solid #b4b4b4;"></div>
<div class="t" style="left:1566px;top:362.83px;font-size:16.5px;color:#333;font-weight:normal;font-style:normal;font-family:'Liberation Sans', sans-serif;">ads</div>
<div class="t" style="left:1558px;top:400.79px;font-size:17.5px;color:#2f5c9c;font-weight:normal;font-style:normal;font-family:'Liberation Sans', sans-serif;">All Properties</div>
<svg class="r" style="left:1537px;top:453px" width="11" height="11" viewBox="0 0 11 11"><path d="M10.5 0.5V10.5H0.5Z" fill="#444"/></svg>
<div class="t" style="left:1558px;top:452.89px;font-size:16.2px;color:#217346;font-weight:bold;font-style:normal;font-family:'Liberation Sans', sans-serif;">APPLIED STEPS</div>
<div class="r" style="left:1557px;top:480px;width:327px;height:465px;background:#fff;border:2px solid #c4c4c4;"></div>
<div class="r" style="left:1559px;top:542.3px;width:323px;height:29.4px;background:#d5eee0;"></div>
<div class="t" style="left:1588.8px;top:489.89px;font-size:16.9px;color:#333;font-weight:normal;font-style:normal;font-family:'Liberation Sans', sans-serif;">Source</div>
<div class="t" style="left:1588.8px;top:518.99px;font-size:17.5px;color:#333;font-weight:normal;font-style:normal;font-family:'Liberation Sans', sans-serif;letter-spacing:0.089px;">Promoted Headers</div>
<div class="t" style="left:1588.8px;top:548.74px;font-size:17.2px;color:#333;font-weight:normal;font-style:normal;font-family:'Liberation Sans', sans-serif;letter-spacing:0.174px;">Changed Type</div>
<svg class="r" style="left:1566px;top:550px" width="17" height="15" viewBox="0 0 17 15"><path d="M1.5 1L15 14M15 1L1.5 14" stroke="#555" stroke-width="2"/></svg>
<svg class="r" style="left:1855px;top:488.5px" width="16" height="16" viewBox="0 0 16 16"><g fill="#9a9a9a"><circle cx="8" cy="8" r="5.2"/><rect x="6.4" y="0" width="3.2" height="16" transform="rotate(0 8 8)"/><rect x="6.4" y="0" width="3.2" height="16" transform="rotate(45 8 8)"/><rect x="6.4" y="0" width="3.2" height="16" transform="rotate(90 8 8)"/><rect x="6.4" y="0" width="3.2" height="16" transform="rotate(135 8 8)"/></g><circle cx="8" cy="8" r="2.3" fill="#fff"/></svg>
<svg class="r" style="left:1855px;top:518.5px" width="16" height="16" viewBox="0 0 16 16"><g fill="#9a9a9a"><circle cx="8" cy="8" r="5.2"/><rect x="6.4" y="0" width="3.2" height="16" transform="rotate(0 8 8)"/><rect x="6.4" y="0" width="3.2" height="16" transform="rotate(45 8 8)"/><rect x="6.4" y="0" width="3.2" height="16" transform="rotate(90 8 8)"/><rect x="6.4" y="0" width="3.2" height="16" transform="rotate(135 8 8)"/></g><circle cx="8" cy="8" r="2.3" fill="#fff"/></svg>
<div class="r" style="left:0px;top:975px;width:1918px;height:25px;background:#217346;"></div>
<div class="t" style="left:8px;top:984.19px;font-size:17.5px;color:#ffffff;font-weight:normal;font-style:normal;font-family:'Liberation Sans', sans-serif;letter-spacing:-1.352px;">7 COLUMNS, 200 ROWS</div>
<div class="t" style="right:8.026px;top:984.19px;font-size:17.5px;color:#ffffff;font-weight:normal;font-style:normal;letter-spacing:-1.326px;">PREVIEW DOWNLOADED AT 03:06 PM</div>
</body></html>
